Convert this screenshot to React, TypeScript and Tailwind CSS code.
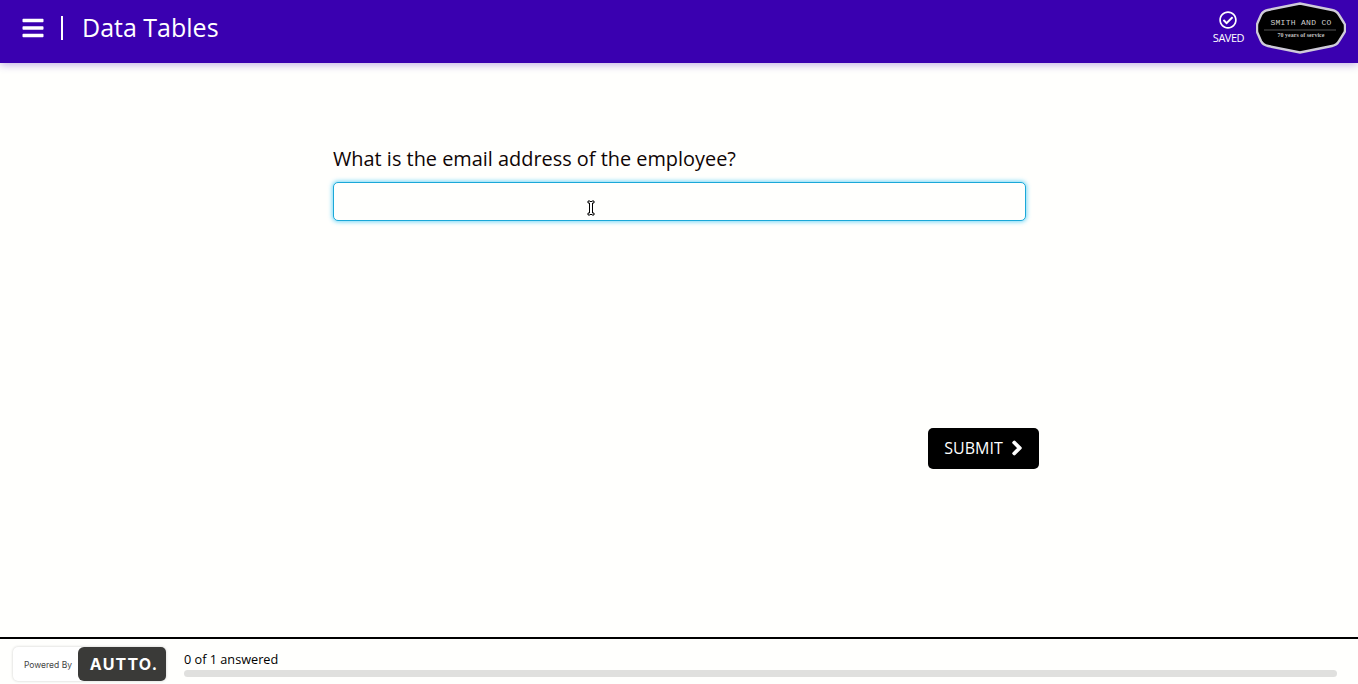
import React from 'react';
import { FaBars, FaChevronRight, FaRegCheckCircle } from 'react-icons/fa';

const Logo: React.FC = () => {
  return (
    <div className="relative w-[90px] h-[52px]">
      <svg width="90" height="52" viewBox="0 0 90 52" className="absolute inset-0">
        <path d="M12 8 L44 1.5 L76 8 Q81 9 83 13 L88 21 Q89 22 89 24 L89 28 Q89 30 88 31 L83 39 Q81 43 76 44 L44 50.5 L12 44 Q7 43 5 39 L1.5 31 Q1 30 1 28 L1 24 Q1 22 1.5 21 L5 13 Q7 9 12 8 Z" fill="#000" stroke="#cfcbd9" strokeWidth="2.4" />
        <line x1="8" y1="28" x2="80" y2="28" stroke="#555" strokeWidth="1" />
      </svg>
      <div className="absolute inset-0 flex flex-col items-center text-center">
        <span className="mt-[15px] text-[8px] leading-[12px] tracking-[0.3px] text-[#cfcfcf] font-['Liberation_Mono',monospace]">SMITH AND CO</span>
        <span className="mt-[2px] text-[6px] leading-[8px] font-bold text-[#c0c0c0] font-['Liberation_Serif',serif]">70 years of service</span>
      </div>
    </div>
  );
};

const App: React.FC = () => {
  return (
    <div className="h-[684px] flex flex-col bg-[#fffffd] overflow-hidden font-['Open_Sans',sans-serif]">
      <header className="h-[63px] shrink-0 bg-[#3a00b0] shadow-[0px_2px_8px_0px_rgba(58,0,176,0.3)] flex items-center justify-between pb-[8px] pl-[21px] pr-[12px]">
        <div className="flex items-center">
          <FaBars className="text-white w-[24px] h-[24px]" />
          <div className="w-[2px] h-[24px] bg-white ml-[16px] mr-[19px]"></div>
          <div className="text-[25px] leading-[32px] text-white mt-[-2px]">Data Tables</div>
        </div>
        <div className="flex items-center gap-[12px]">
          <div className="flex flex-col items-center text-white">
            <FaRegCheckCircle className="w-[18px] h-[18px]" />
            <span className="text-[11px] leading-[15px] mt-[1px] font-medium tracking-[-0.5px]">SAVED</span>
          </div>
          <Logo />
        </div>
      </header>

      <main className="flex-1 relative">
        <div className="w-[693px] ml-[333px] pt-[82px]">
          <div className="text-[19.9px] leading-[27px] text-[#0f0505]">What is the email address of the employee?</div>
          <input
            type="text"
            className="mt-[10px] block w-full h-[39px] rounded-[5px] border border-[#1ba8d8] bg-[#fffffd] shadow-[0_0_4px_1px_rgba(60,200,245,0.7)] outline-none"
          />
        </div>
        <div className="w-[706px] ml-[333px] mt-[207px] flex justify-end">
          <button className="h-[41px] w-[111px] bg-black rounded-[5px] text-white text-[16px] flex items-center justify-center gap-[6px] pb-[2px] pl-[2px]">
            SUBMIT
            <FaChevronRight className="w-[16px] h-[16px]" stroke="currentColor" strokeWidth={40} />
          </button>
        </div>
        <svg width="10" height="16" viewBox="0 0 10 16" className="absolute left-[586px] top-[137px]">
          <path d="M2 1h2l1 1 1-1h2v2H6.5v10H8v2H6l-1-1-1 1H2v-2h1.5V3H2z" fill="#fff" stroke="#000" strokeWidth="1" />
        </svg>
      </main>

      <footer className="h-[47px] shrink-0 border-t-2 border-black bg-[#fffffd] flex items-center pt-[4px] pl-[13px] pr-[21px]">
        <div className="w-[153px] h-[34px] flex rounded-[5px] shadow-[0_0_3px_rgba(0,0,0,0.2)] bg-white overflow-hidden">
          <div className="w-[65px] flex items-center justify-end pr-[6px] pt-[3px] text-[8.5px] text-[#444] font-['Inter',sans-serif]">Powered By</div>
          <div className="flex-1 bg-[#3a3a38] rounded-l-[6px] flex items-center justify-center pl-[4px] text-white text-[16px] font-bold tracking-[1.2px] font-['Inter',sans-serif]">AUTTO.</div>
        </div>
        <div className="flex-1 ml-[18px]">
          <div className="text-[12.7px] leading-[19px] text-black">0 of 1 answered</div>
          <div className="h-[7px] mt-[1px] rounded-full bg-[#e0e0de]"></div>
        </div>
      </footer>
    </div>
  );
};

export default App;
